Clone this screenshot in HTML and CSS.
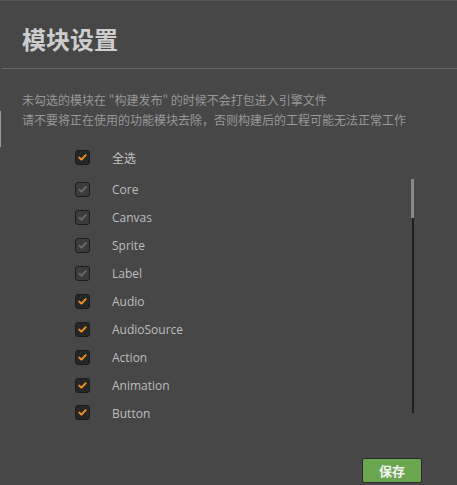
FILE: index.html
```html
<!DOCTYPE html>
<html lang="zh">
<head>
<meta charset="utf-8">
<title>模块设置</title>
<link rel="stylesheet" href="styles.css">
</head>
<body>
<div class="edge"></div>
<header class="header"><h1 class="title">模块设置</h1></header>
<div class="desc">
  <p>未勾选的模块在 "构建发布" 的时候不会打包进入引擎文件</p>
  <p>请不要将正在使用的功能模块去除，否则构建后的工程可能无法正常工作</p>
</div>
<div class="row all"><span class="cb on"><svg viewBox="0 0 15 15"><path d="M3.8 7.6 L6.3 10 L11.2 4.8"/></svg></span><span class="label">全选</span></div>
<div class="list">
  <div class="row"><span class="cb off"><svg viewBox="0 0 15 15"><path d="M3.8 7.6 L6.3 10 L11.2 4.8"/></svg></span><span class="label">Core</span></div>
  <div class="row"><span class="cb off"><svg viewBox="0 0 15 15"><path d="M3.8 7.6 L6.3 10 L11.2 4.8"/></svg></span><span class="label">Canvas</span></div>
  <div class="row"><span class="cb off"><svg viewBox="0 0 15 15"><path d="M3.8 7.6 L6.3 10 L11.2 4.8"/></svg></span><span class="label">Sprite</span></div>
  <div class="row"><span class="cb off"><svg viewBox="0 0 15 15"><path d="M3.8 7.6 L6.3 10 L11.2 4.8"/></svg></span><span class="label">Label</span></div>
  <div class="row"><span class="cb on"><svg viewBox="0 0 15 15"><path d="M3.8 7.6 L6.3 10 L11.2 4.8"/></svg></span><span class="label">Audio</span></div>
  <div class="row"><span class="cb on"><svg viewBox="0 0 15 15"><path d="M3.8 7.6 L6.3 10 L11.2 4.8"/></svg></span><span class="label">AudioSource</span></div>
  <div class="row"><span class="cb on"><svg viewBox="0 0 15 15"><path d="M3.8 7.6 L6.3 10 L11.2 4.8"/></svg></span><span class="label">Action</span></div>
  <div class="row"><span class="cb on"><svg viewBox="0 0 15 15"><path d="M3.8 7.6 L6.3 10 L11.2 4.8"/></svg></span><span class="label">Animation</span></div>
  <div class="row last"><span class="cb on"><svg viewBox="0 0 15 15"><path d="M3.8 7.6 L6.3 10 L11.2 4.8"/></svg></span><span class="label">Button</span></div>
  <div class="scrollbar"><div class="thumb"></div><div class="track"></div></div>
</div>
<footer class="footer"><button class="save">保存</button></footer>
</body>
</html>
```
FILE: styles.css
```css
html, body {
  margin: 0;
  padding: 0;
}
body {
  width: 457px;
  height: 485px;
  overflow: hidden;
  background: #474747;
  border-top: 1px solid #555555;
  box-sizing: border-box;
  position: relative;
  font-family: "Open Sans", "Noto Sans CJK SC", sans-serif;
}
.edge {
  position: absolute;
  left: 0;
  top: 110px;
  width: 1px;
  height: 36px;
  background: #9a9a9a;
}
.header {
  margin-left: 2px;
  padding: 22px 0 13px 20px;
  border-bottom: 1px solid #686868;
}
.title {
  margin: 0;
  font-family: "Noto Sans CJK SC", sans-serif;
  font-size: 24px;
  line-height: 32px;
  font-weight: 700;
  color: #cdcdcd;
}
.desc {
  margin-top: 21px;
  padding-left: 22px;
  font-family: "Noto Sans CJK SC", sans-serif;
  font-size: 12px;
  line-height: 20px;
  color: #989898;
}
.desc p {
  margin: 0;
}
.row {
  height: 28px;
  display: flex;
  align-items: center;
  padding-left: 75px;
  gap: 22px;
}
.row.all {
  margin-top: 13px;
}
.label {
  font-size: 12px;
  color: #bdbdbd;
  line-height: 14px;
  padding-top: 2px;
}
.all .label {
  font-family: "Noto Sans CJK SC", sans-serif;
  color: #c4c4c4;
}
.cb {
  width: 15px;
  height: 15px;
  box-sizing: border-box;
  border-radius: 3px;
  border: 1px solid #1c1c1c;
  display: block;
  flex: none;
}
.cb svg {
  display: block;
  width: 13px;
  height: 13px;
}
.cb svg path {
  fill: none;
  stroke-width: 2.2;
  stroke-linecap: round;
  stroke-linejoin: round;
}
.cb.on {
  background: #262626;
}
.cb.on svg path {
  stroke: #f7931e;
}
.cb.off {
  background: #3c3c3c;
}
.cb.off svg path {
  stroke: #6a6a6a;
}
.list {
  position: relative;
  margin-top: 4px;
  height: 246px;
  overflow: hidden;
}
.row.last {
  height: 22px;
  align-items: flex-start;
  padding-top: 6px;
  box-sizing: border-box;
}
.scrollbar {
  position: absolute;
  left: 411px;
  top: 4px;
  width: 3px;
  height: 234px;
  display: flex;
  flex-direction: column;
  align-items: center;
}
.thumb {
  width: 3px;
  height: 39px;
  background: #888888;
}
.track {
  width: 2px;
  flex: 1;
  background: #1e1e1e;
}
.footer {
  display: flex;
  justify-content: flex-end;
  padding-right: 35px;
  margin-top: 37px;
}
.save {
  width: 60px;
  height: 25px;
  box-sizing: border-box;
  border: 1px solid #2a2a2a;
  border-radius: 2px;
  background: #6aa54f;
  color: #f2f2f2;
  font-family: "Noto Sans CJK SC", sans-serif;
  font-size: 13px;
  font-weight: 700;
  padding: 0;
  line-height: 22px;
}
```
